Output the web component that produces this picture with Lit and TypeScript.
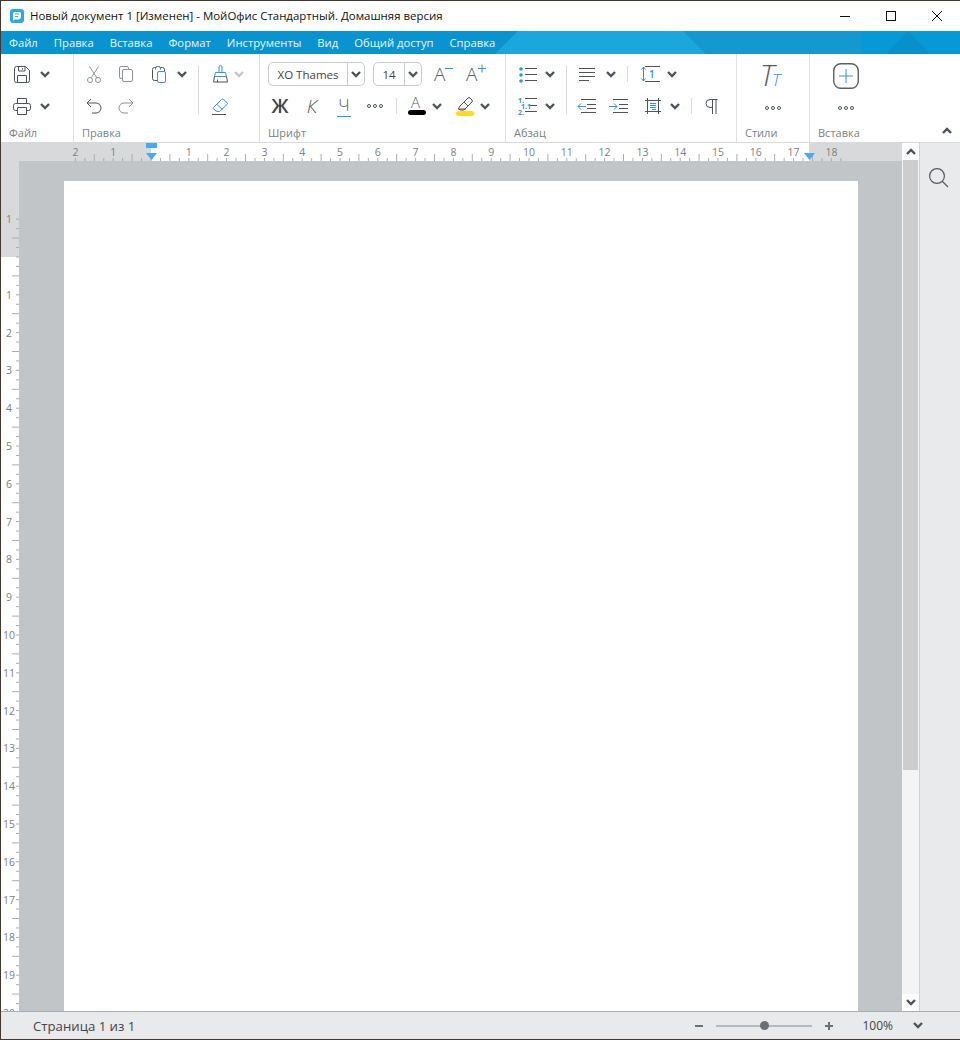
import { LitElement, html, css, svg } from 'lit';
import { customElement } from 'lit/decorators.js';

const icon = (w: number, h: number, body: unknown) =>
  html`<svg width=${w} height=${h} viewBox="0 0 ${w} ${h}">${body}</svg>`;

const chev = (off = false) =>
  icon(10, 7, svg`<path class=${off ? 'off' : 'chv'} d="M1 1l4 4 4-4"/>`);

const chevUp = () => icon(10, 7, svg`<path class="chv" d="M1 6l4-4 4 4"/>`);

const dots = () =>
  icon(16, 4, svg`<g class="d"><circle cx="2" cy="2" r="1.5"/><circle cx="8" cy="2" r="1.5"/><circle cx="14" cy="2" r="1.5"/></g>`);

const save = icon(16, 17, svg`<g class="d">
  <path d="M2.5.5h9l4 4v10a2 2 0 0 1-2 2h-11a2 2 0 0 1-2-2v-12a2 2 0 0 1 2-2z"/>
  <path d="M4.5.5v4.5h6.5v-4.5M3.5 16.5v-7h9v7M8.5 2v1.5"/></g>`);

const print = icon(18, 17, svg`<g class="d">
  <path d="M4.5 5.5v-5h9v5M4.5 12.5h-2a2 2 0 0 1-2-2v-3a2 2 0 0 1 2-2h13a2 2 0 0 1 2 2v3a2 2 0 0 1-2 2h-2"/>
  <path d="M4.5 9.5h9v7h-9z"/></g>`);

const cut = icon(14, 17, svg`<g class="g">
  <circle cx="3" cy="14" r="2.5"/><circle cx="11" cy="14" r="2.5"/>
  <path d="M4.2 11.8L11.5.5M9.8 11.8L2.5.5"/></g>`);

const copy = icon(14, 16, svg`<g class="g">
  <rect x="3.5" y="3.5" width="10" height="12" rx="1.5"/>
  <path d="M3.5 12.5h-1.5a1.5 1.5 0 0 1-1.5-1.5v-9a1.5 1.5 0 0 1 1.5-1.5h6a1.5 1.5 0 0 1 1.5 1.5v1.5"/></g>`);

const paste = icon(14, 17, svg`
  <path class="d" d="M5.5 14.5h-3a2 2 0 0 1-2-2v-9a2 2 0 0 1 2-2h1M3.5 3.5v-1a2 2 0 0 1 2-2h1a2 2 0 0 1 2 2v1M8.5 1.5h2a2 2 0 0 1 2 2v2"/>
  <rect class="b" x="5.5" y="5.5" width="8" height="11" rx="1.5"/>`);

const brush = icon(15, 18, svg`
  <path class="b" d="M6 7V2a1.5 1.5 0 0 1 3 0v5M2.5 7.5h10l1 4h-12z"/>
  <path class="d" d="M1.5 11.5l-1 5.5h14l-1-5.5M4.5 17v-2.500"/>`);

const eraser = icon(17, 17, svg`
  <path class="b" d="M1.500 9.500l8-8a1.500 1.500 0 0 1 2 0l3.500 3a1.500 1.500 0 0 1 0 2l-7.500 7h-2.500l-3.500-2.500a1 1 0 0 1 0-1.500zM5 6.500l5.500 5"/>
  <path class="d" d="M0 16.500h14"/>`);

const undo = icon(16, 16, svg`<path class="d" d="M5 1L1 5l4 4M1 5h9a5 5 0 0 1 0 10H6"/>`);
const redo = icon(16, 16, svg`<path class="g" d="M11 1l4 4-4 4M15 5H6a5 5 0 0 0 0 10h4"/>`);

const smaller = icon(19, 20, svg`<text class="cap" x="0" y="17">A</text><path class="b" d="M11 4.500h8"/>`);
const larger = icon(21, 20, svg`<text class="cap" x="0" y="17">A</text><path class="b" d="M12 4.500h8M16 .5v8"/>`);

const textColor = icon(20, 20, svg`<text class="cap small" x="4" y="12">A</text><rect class="inkbar" x="1" y="14" width="18" height="5" rx="2.500"/>`);
const marker = icon(20, 20, svg`
  <path class="d" d="M5 10l8-8a1.500 1.500 0 0 1 2 0l2 2a1.500 1.500 0 0 1 0 2l-8 8H5l-1.500-1.500zM9 6l4 4M3 13h8"/>
  <rect class="hlbar" x="1" y="15" width="18" height="5" rx="2.500"/>`);

const bullets = icon(18, 15, svg`
  <circle class="bf" cx="2" cy="2" r="1.800"/><circle class="bf" cx="2" cy="8" r="1.800"/><circle class="bf" cx="2" cy="14" r="1.800"/>
  <path class="d" d="M6 1.500h12M6 7.500h12M6 13.500h12"/>`);

const numbers = icon(20, 17, svg`
  <text class="num" x="0" y="5">1.</text><text class="num" x="3" y="11">1.1</text><text class="num" x="0" y="17">2.</text>
  <path class="d" d="M7 .5h12M12 7.500h7M7 13.500h12"/>`);

const align = icon(16, 13, svg`<path class="d" d="M0 .5h16M0 4.500h16M0 8.500h16M0 12.500h10"/>`);

const spacing = icon(19, 16, svg`
  <path class="b" d="M2.500 1v14M.5 3.500l2-2.500 2 2.500M.5 12.500l2 2.500 2-2.500"/>
  <path class="d" d="M4 .5h15M4 15.500h15"/>
  <text class="one" x="8" y="12">1</text>`);

const outdent = icon(19, 14, svg`
  <path class="d" d="M4 .5h15M10 5.500h9M10 9.500h9M4 13.500h15"/>
  <path class="b" d="M9 7.500H1M4 4.500l-3 3 3 3"/>`);

const indent = icon(19, 14, svg`
  <path class="d" d="M4 .5h15M10 5.500h9M10 9.500h9M4 13.500h15"/>
  <path class="b" d="M0 7.500h8M5 4.500l3 3-3 3"/>`);

const frame = icon(16, 16, svg`
  <path class="d" d="M0 2.500h16M0 13.500h16M2.500 0v16M13.500 0v16"/>
  <path class="b" d="M5 5.500h6M5 7.500h6M5 9.500h6M7 11.500h4"/>`);

// toolbar button for formatting marks: open bowl and two stems
const marks = icon(13, 15, svg`<path class="d" d="M12.500.5H5a4 4 0 0 0 0 8h2.500M7.500.5V15M11 .5V15"/>`);

const stylesIcon = icon(26, 24, svg`
  <text class="tbig" x="0" y="22">T</text><text class="tsmall" x="12" y="22">T</text>`);

const insertIcon = icon(26, 26, svg`
  <rect class="box" x=".75" y=".75" width="24.500" height="24.500" rx="7"/>
  <path class="b" d="M13 6v14M6 13h14"/>`);

const logo = icon(14, 14, svg`
  <rect class="logo" width="14" height="14" rx="3"/>
  <path class="logow" d="M3 4.500a1.500 1.500 0 0 1 1.500-1.500h5a1.500 1.500 0 0 1 1.500 1.500v3a3 3 0 0 1-3 3H4.500L3 12z"/>
  <path class="logol" d="M5 5h4M5 7.500h3"/>`);

// cm scale of the rulers: 37.8px per cm, ticks every quarter
const CM = 37.8;

const hRuler = () => {
  const zero = 150;
  const ticks = [];
  for (let q = -8; q <= 73; q++) {
    const x = zero + (q * CM) / 4;
    const long = Math.abs(q) % 4 === 2;
    ticks.push(svg`<line class="tick" x1=${x} x2=${x} y1=${long ? 11 : 15} y2="18"/>`);
    if (q % 4 === 0 && q !== 0) {
      ticks.push(svg`<text class="rnum" x=${x} y="13" text-anchor="middle">${Math.abs(q / 4)}</text>`);
    }
  }
  return html`<svg width="901" height="18" viewBox="0 0 901 18">
    <rect class="rgray" width="150" height="18"/>
    <rect class="rgray" x="808" width="93" height="18"/>
    ${ticks}
    <rect class="mark" x="145" y="0" width="11" height="5"/>
    <path class="mark" d="M145 10h11l-5.500 7z"/>
    <path class="mark" d="M803 10h11l-5.500 7z"/>
  </svg>`;
};

const vRuler = () => {
  const zero = 96;
  const ticks = [];
  for (let q = -3; q <= 80; q++) {
    const y = zero + (q * CM) / 4;
    const n = Math.abs(q);
    const long = n % 4 === 2;
    if (y < 36) continue;
    ticks.push(svg`<line class="tick" x1=${long ? 11 : 15} x2="18" y1=${y} y2=${y}/>`);
    if (q % 4 === 0 && q !== 0) {
      ticks.push(svg`<text class="rnum" x="8" y=${y + 4} text-anchor="middle">${n / 4}</text>`);
    }
  }
  // one cm above the page start is labelled too
  ticks.push(svg`<line class="tick" x1="15" x2="18" y1=${zero - CM} y2=${zero - CM}/>`);
  ticks.push(svg`<text class="rnum" x="8" y=${zero - CM + 4} text-anchor="middle">1</text>`);
  return html`<svg width="18" height="850" viewBox="0 0 18 850">
    <rect class="rgray" width="18" height=${zero}/>
    ${ticks}
  </svg>`;
};

@customElement('app-root')
export class AppRoot extends LitElement {
  static styles = css`
    :host {
      display: block;
      width: 960px;
      height: 1040px;
      box-sizing: border-box;
      padding: 1px 0 1px 1px;
      background: #45392f;
      font-family: 'Open Sans', 'Noto Sans', sans-serif;
      color: #444;
      overflow: hidden;
    }
    .win {
      display: flex;
      flex-direction: column;
      height: 100%;
      background: #fff;
    }
    svg {
      display: block;
      overflow: visible;
    }

    /* svg strokes */
    .d, .g, .b, .chv, .off, .box {
      fill: none;
      stroke-width: 1;
    }
    .d { stroke: #4d5359; }
    .g { stroke: #8d9398; }
    .b { stroke: #2f93e6; }
    .chv { stroke: #4d5359; stroke-width: 2.4; }
    .off { stroke: #c4c6c8; stroke-width: 2.4; }
    .box { stroke: #5b6066; stroke-width: 1.4; }
    .bf { fill: #2f93e6; }
    .inkbar { fill: #000; }
    .hlbar { fill: #ffd829; }
    .logo { fill: #2aa9ec; }
    .logow { fill: #fff; }
    .logol { fill: none; stroke: #2aa9ec; }
    .cap {
      font: 300 19px 'Open Sans', sans-serif;
      fill: #555b61;
    }
    .cap.small { font-size: 15px; }
    .num {
      font: 700 7px 'Open Sans', sans-serif;
      fill: #2f93e6;
    }
    .one {
      font: 600 10px 'Open Sans', sans-serif;
      fill: #2f93e6;
    }
    .tbig {
      font: italic 300 29px 'Open Sans', sans-serif;
      fill: #555b61;
    }
    .tsmall {
      font: italic 300 17px 'Open Sans', sans-serif;
      fill: #2f93e6;
    }
    .tick { stroke: #a9adb0; stroke-width: 1; }
    .rnum {
      font: 10.5px 'Open Sans', sans-serif;
      fill: #7b7f83;
    }
    .rgray { fill: #d8d9db; }
    .mark { fill: #4aa8f5; }

    /* title bar */
    .title {
      display: flex;
      align-items: center;
      height: 30px;
      flex: none;
      padding-left: 9px;
      font-size: 11.45px;
      color: #111;
    }
    .title .name {
      margin-left: 6px;
      flex: 1;
      padding-bottom: 2px;
    }
    .winbtn {
      width: 46px;
      height: 30px;
      display: flex;
      align-items: center;
      justify-content: center;
    }
    .winbtn svg * {
      fill: none;
      stroke: #111;
    }

    /* menu */
    .menu {
      position: relative;
      flex: none;
      display: flex;
      gap: 16px;
      align-items: center;
      height: 23px;
      padding-left: 8px;
      background: #0a94cf;
      font-size: 11.25px;
      color: #e9f5fb;
    }
    .menu span {
      position: relative;
    }
    .menubg {
      position: absolute;
      left: 0;
      top: 0;
    }
    .bg1 { fill: #1ba7dc; }
    .bg2 { fill: #1598d0; }
    .bg3 { fill: #0799d6; }
    .bg4 { fill: #0890cc; }

    /* ribbon */
    .ribbon {
      flex: none;
      display: flex;
      height: 89px;
      box-sizing: border-box;
      border-bottom: 1px solid #d9d9d9;
    }
    .grp {
      box-sizing: border-box;
      border-right: 1px solid #e0e0e0;
      display: flex;
      flex-direction: column;
      padding-top: 4px;
    }
    .grp:last-child {
      border-right: 0;
      flex: 1;
    }
    .g-file { width: 73px; }
    .g-edit { width: 186px; }
    .g-font { width: 246px; }
    .g-para { width: 231px; }
    .g-style { width: 73px; }
    .tools {
      height: 64px;
      flex: none;
    }
    .row {
      display: grid;
      grid-auto-rows: 32px;
      place-items: center;
    }
    .label {
      display: flex;
      justify-content: space-between;
      align-items: center;
      height: 20px;
      font-size: 11px;
      color: #7b7f83;
      padding: 1px 8px 0 8px;
    }
    .label svg {
      margin-bottom: 5px;
    }
    .g-file .row {
      grid-template-columns: 30px 16px;
      margin-left: 6px;
    }
    .g-edit .row {
      grid-template-columns: 30px 34px 32px 14px 18px 26px 12px;
      margin-left: 5px;
    }
    .font-top {
      grid-template-columns: 105px 55px 30px 36px;
      margin-left: 8px;
    }
    .font-bot {
      grid-template-columns: 32px 32px 32px 30px 12px 30px 10px 8px 30px 10px;
      margin-left: 4px;
    }
    .para-top {
      grid-template-columns: 22px 22px 10px 32px 16px 16px 30px 14px;
      margin-left: 11px;
    }
    .para-bot {
      grid-template-columns: 22px 22px 10px 31px 33px 36px 8px 24px 16px;
      margin-left: 11px;
    }
    .g-big .tools {
      display: grid;
      grid-template-columns: 72px;
      grid-template-rows: 32px 32px;
      place-items: center;
    }
    .g-big .tools > svg {
      margin-top: 4px;
    }
    .sep {
      width: 1px;
      height: 16px;
      background: #d9d9d9;
    }
    .sep.tall {
      height: 48px;
      grid-column: 5;
      grid-row: 1 / span 2;
    }
    .sep.over {
      height: 48px;
      align-self: start;
      margin-top: 8px;
    }

    .select {
      display: flex;
      align-items: stretch;
      justify-self: start;
      box-sizing: border-box;
      height: 24px;
      border: 1px solid #c9cacb;
      border-radius: 5px;
      font-size: 11.5px;
      color: #444;
    }
    .select .val {
      display: flex;
      align-items: center;
      justify-content: center;
      border-right: 1px solid #c9cacb;
    }
    .select .arr {
      flex: 1;
      display: flex;
      align-items: center;
      justify-content: center;
    }
    .sel-font { width: 97px; }
    .sel-font .val { width: 78px; }
    .sel-size { width: 49px; }
    .sel-size .val { width: 30px; }

    .letter {
      font-size: 19px;
      line-height: 20px;
      color: #555b61;
    }
    .bold { font-weight: 600; color: #3d4349; }
    .ital { font-style: italic; font-weight: 300; }
    .under {
      font-size: 17px;
      font-weight: 300;
      border-bottom: 1px solid #2f93e6;
      padding: 0 1px 1px;
    }

    /* middle */
    .middle {
      flex: 1;
      min-height: 0;
      display: flex;
    }
    .doc {
      width: 901px;
      display: flex;
      flex-direction: column;
    }
    .doc-body {
      flex: 1;
      min-height: 0;
      display: flex;
    }
    .vr {
      width: 18px;
      overflow: hidden;
    }
    .canvas {
      flex: 1;
      background: #c2c5c8;
      padding: 20px 44px 0 45px;
      min-height: 0;
      display: flex;
    }
    .page {
      flex: 1;
      background: #fff;
    }
    .scroll {
      width: 17px;
      box-sizing: content-box;
      display: flex;
      flex-direction: column;
      background: #f4f4f4;
      border-right: 1px solid #cfd1d3;
    }
    .sbtn {
      height: 17px;
      flex: none;
      background: #fff;
      display: flex;
      align-items: center;
      justify-content: center;
    }
    .thumb {
      height: 610px;
      margin: 0 1px;
      background: #cdcdcd;
    }
    .track { flex: 1; }
    .side {
      flex: 1;
      background: #e9eaec;
      padding: 25px 0 0 9px;
    }
    .side path, .side circle {
      fill: none;
      stroke: #55595e;
      stroke-width: 1.2;
    }

    /* status */
    .status {
      flex: none;
      height: 28px;
      box-sizing: border-box;
      border-top: 1px solid #a9aeb2;
      background: #e9eaec;
      display: flex;
      align-items: center;
      padding-left: 32px;
      font-size: 13.2px;
      color: #444;
    }
    .status .pages { flex: 1; }
    .status .zm {
      stroke: #6c7075;
      stroke-width: 2;
      fill: none;
    }
    .slider {
      width: 96px;
      height: 2px;
      background: #b7b9bb;
      margin: 0 13px 0 13px;
      display: flex;
      align-items: center;
    }
    .knob {
      width: 9px;
      height: 9px;
      border-radius: 50%;
      background: #6c7075;
      margin-left: 44px;
    }
    .pct {
      font-size: 12px;
      margin: 0 20px 0 29px;
    }
    .status > svg:last-child {
      margin-right: 37px;
    }
  `;

  render() {
    const menu = ['Файл', 'Правка', 'Вставка', 'Формат', 'Инструменты', 'Вид', 'Общий доступ', 'Справка'];
    return html`<div class="win">
      <div class="title">
        ${logo}
        <div class="name">Новый документ 1 [Изменен] - МойОфис Стандартный. Домашняя версия</div>
        <div class="winbtn">${icon(10, 1, svg`<path d="M0 .5h10"/>`)}</div>
        <div class="winbtn">${icon(10, 10, svg`<rect x=".5" y=".5" width="9" height="9"/>`)}</div>
        <div class="winbtn">${icon(10, 10, svg`<path d="M0 0l10 10M10 0L0 10"/>`)}</div>
      </div>

      <div class="menu">
        <svg class="menubg" width="959" height="23" viewBox="0 0 959 23">
          <polygon class="bg1" points="494,23 517,0 682,0 705,23"/>
          <polygon class="bg2" points="682,0 959,0 959,23 705,23"/>
          <polygon class="bg3" points="860,0 959,0 959,23 860,23"/>
          <polygon class="bg4" points="885,23 907,0 929,23"/>
        </svg>
        ${menu.map((m) => html`<span>${m}</span>`)}
      </div>

      <div class="ribbon">
        <div class="grp g-file">
          <div class="tools row">${save}${chev()}${print}${chev()}</div>
          <div class="label">Файл</div>
        </div>
        <div class="grp g-edit">
          <div class="tools row">
            ${cut}${copy}${paste}${chev()}<div class="sep tall"></div>${brush}${chev(true)}
            ${undo}${redo}<i></i><i></i>${eraser}
          </div>
          <div class="label">Правка</div>
        </div>
        <div class="grp g-font">
          <div class="tools">
            <div class="row font-top">
              <div class="select sel-font"><div class="val">ХО Thames</div><div class="arr">${chev()}</div></div>
              <div class="select sel-size"><div class="val">14</div><div class="arr">${chev()}</div></div>
              ${smaller}${larger}
            </div>
            <div class="row font-bot">
              <span class="letter bold">Ж</span>
              <span class="letter ital">К</span>
              <span class="letter under">Ч</span>
              ${dots()}
              <div class="sep"></div>
              ${textColor}${chev()}<i></i>${marker}${chev()}
            </div>
          </div>
          <div class="label">Шрифт</div>
        </div>
        <div class="grp g-para">
          <div class="tools">
            <div class="row para-top">
              ${bullets}${chev()}<div class="sep over"></div>${align}${chev()}<div class="sep"></div>${spacing}${chev()}
            </div>
            <div class="row para-bot">
              ${numbers}${chev()}<i></i>${outdent}${indent}${frame}${chev()}<div class="sep"></div>${marks}
            </div>
          </div>
          <div class="label">Абзац</div>
        </div>
        <div class="grp g-style g-big">
          <div class="tools">${stylesIcon}${dots()}</div>
          <div class="label">Стили</div>
        </div>
        <div class="grp g-big">
          <div class="tools">${insertIcon}${dots()}</div>
          <div class="label"><span>Вставка</span>${chevUp()}</div>
        </div>
      </div>

      <div class="middle">
        <div class="doc">
          ${hRuler()}
          <div class="doc-body">
            <div class="vr">${vRuler()}</div>
            <div class="canvas"><div class="page"></div></div>
          </div>
        </div>
        <div class="scroll">
          <div class="sbtn">${chevUp()}</div>
          <div class="thumb"></div>
          <div class="track"></div>
          <div class="sbtn">${chev()}</div>
        </div>
        <div class="side">
          ${icon(20, 20, svg`<circle cx="8" cy="8" r="7.400"/><path d="M13.500 13.500l5.500 5.500"/>`)}
        </div>
      </div>

      <div class="status">
        <div class="pages">Страница 1 из 1</div>
        ${icon(8, 8, svg`<path class="zm" d="M0 4h8"/>`)}
        <div class="slider"><div class="knob"></div></div>
        ${icon(8, 8, svg`<path class="zm" d="M0 4h8M4 0v8"/>`)}
        <div class="pct">100%</div>
        ${chev()}
      </div>
    </div>`;
  }
}
